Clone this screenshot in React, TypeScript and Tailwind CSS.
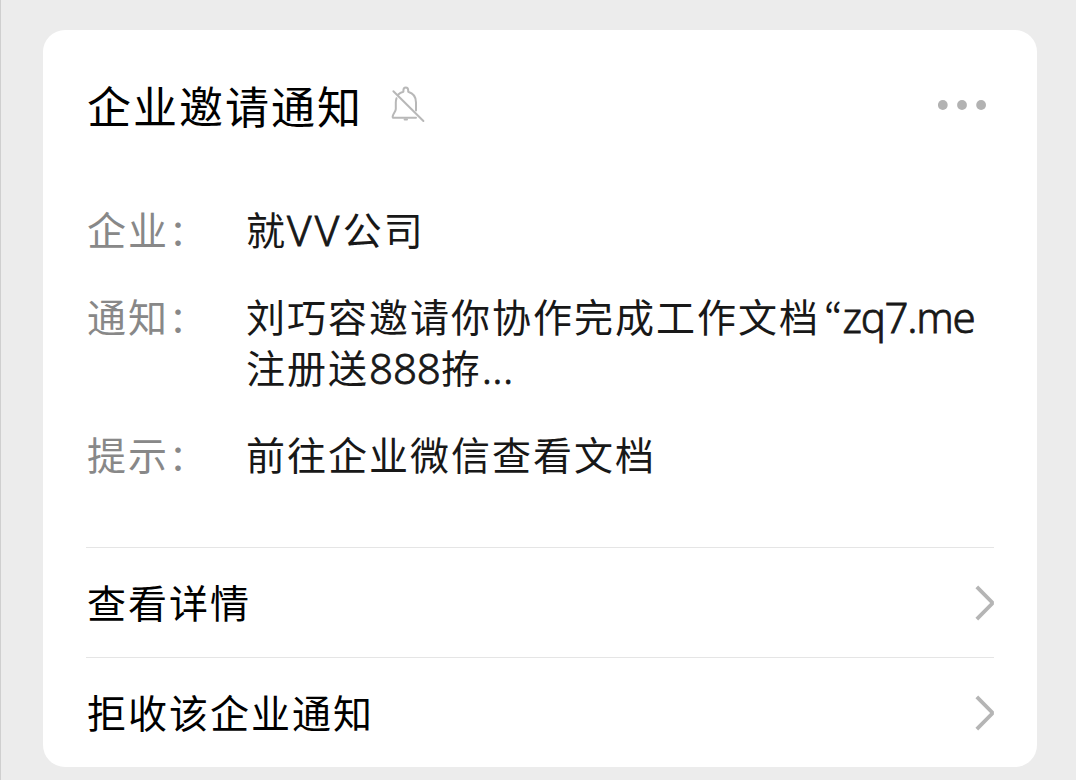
import type { ReactNode } from "react"

const details = [
  {
    label: "企业",
    value: <>就<Latin className="tracking-[3.4px]">VV</Latin>公司</>,
  },
  {
    label: "通知",
    value: (
      <>
        刘巧容邀请你协作完成工作文档
        <span className="ml-[4px] font-['Noto_Sans_CJK_KR',sans-serif] leading-none tracking-normal">“</span>
        <Latin className="tracking-[-1.3px]">zq7.me</Latin>
        <br />
        注册送<Latin className="tracking-[-0.1px]">888</Latin>拵<Latin className="tracking-[0.4px]">...</Latin>
      </>
    ),
  },
  { label: "提示", value: <>前往企业微信查看文档</> },
]

const actions = ["查看详情", "拒收该企业通知"]

// Latin letters and digits are set a little larger than the Chinese text
function Latin({ className, children }: { className: string; children: ReactNode }) {
  return (
    <span
      className={`relative top-px font-['Noto_Sans',sans-serif] text-[42px] font-light leading-none [-webkit-text-stroke:0.8px_#181818] ${className}`}
    >
      {children}
    </span>
  )
}

function BellOff() {
  return (
    <svg
      className="ml-[25px] h-[44px] w-[44px] shrink-0"
      viewBox="0 0 44 44"
      fill="none"
      stroke="#b8b8b8"
      strokeWidth="2"
      strokeLinecap="round"
      strokeLinejoin="round"
    >
      <path d="M5.4 7.2L35.4 37" />
      <path d="M10.3 10.5C11.6 9.2 13.3 8.4 15.4 7.8V6.2C15.4 4.3 16.3 3.4 17.8 3.4C19.3 3.4 20.2 4.3 20.2 6.2V7.8C25 9.2 28 13.3 28 18.5V26.6" />
      <path d="M8.5 14.3C8 15.7 7.8 17 7.8 18.5V25C7.8 27.5 5.3 29.5 4.7 32.2C4.5 33.2 4.8 33.8 5.7 33.8H28" />
      <path d="M16.6 35.6H19" />
    </svg>
  )
}

function MoreDots() {
  return (
    <svg className="ml-auto mr-[8px] mb-[3px] h-[10px] w-[48px]" viewBox="0 0 48 10" fill="#b2b2b2">
      <circle cx="4.8" cy="5" r="4.9" />
      <circle cx="24" cy="5" r="4.9" />
      <circle cx="43.1" cy="5" r="4.9" />
    </svg>
  )
}

function Chevron() {
  return (
    <svg className="h-[36px] w-[19px]" viewBox="0 0 19 36" fill="none" stroke="#b5b5b5" strokeWidth="3.8">
      <path d="M1.8 1.8L17 17.2V18.8L1.8 34.2" />
    </svg>
  )
}

function DetailRow({ label, children }: { label: string; children: ReactNode }) {
  return (
    <div className="flex text-[39px] leading-[51px] tracking-[2px]">
      <dt className="w-[159px] shrink-0 text-[#888888]">
        {label}
        <span className="relative top-px text-[36px] leading-none">：</span>
      </dt>
      <dd className="whitespace-nowrap text-[#181818]">{children}</dd>
    </div>
  )
}

export default function App() {
  return (
    <main className="h-[780px] w-[1076px] overflow-hidden border-l border-[#cfcfcf] bg-[#ececec] pl-[42px] pt-[30px] font-['Noto_Sans','Noto_Sans_CJK_SC',sans-serif]">
      <section className="h-[737px] w-[994px] rounded-[22px] bg-white px-[43px] pt-[44px]">
        <header className="flex h-[64px] items-center pl-px">
          <h1 className="pt-[2px] text-[44px] leading-[62px] tracking-[2px] text-black">企业邀请通知</h1>
          <BellOff />
          <MoreDots />
        </header>
        <dl className="mt-[66px] space-y-[36px] pl-px">
          {details.map((item) => (
            <DetailRow key={item.label} label={item.label}>{item.value}</DetailRow>
          ))}
        </dl>
        <div className="mt-[67px]">
          {actions.map((action) => (
            <button
              key={action}
              className="flex h-[110px] w-full items-center justify-between border-t border-[#e5e5e5] pl-px text-[39px] tracking-[2px] text-black"
            >
              <span className="pt-[2px]">{action}</span>
              <Chevron />
            </button>
          ))}
        </div>
      </section>
    </main>
  )
}
